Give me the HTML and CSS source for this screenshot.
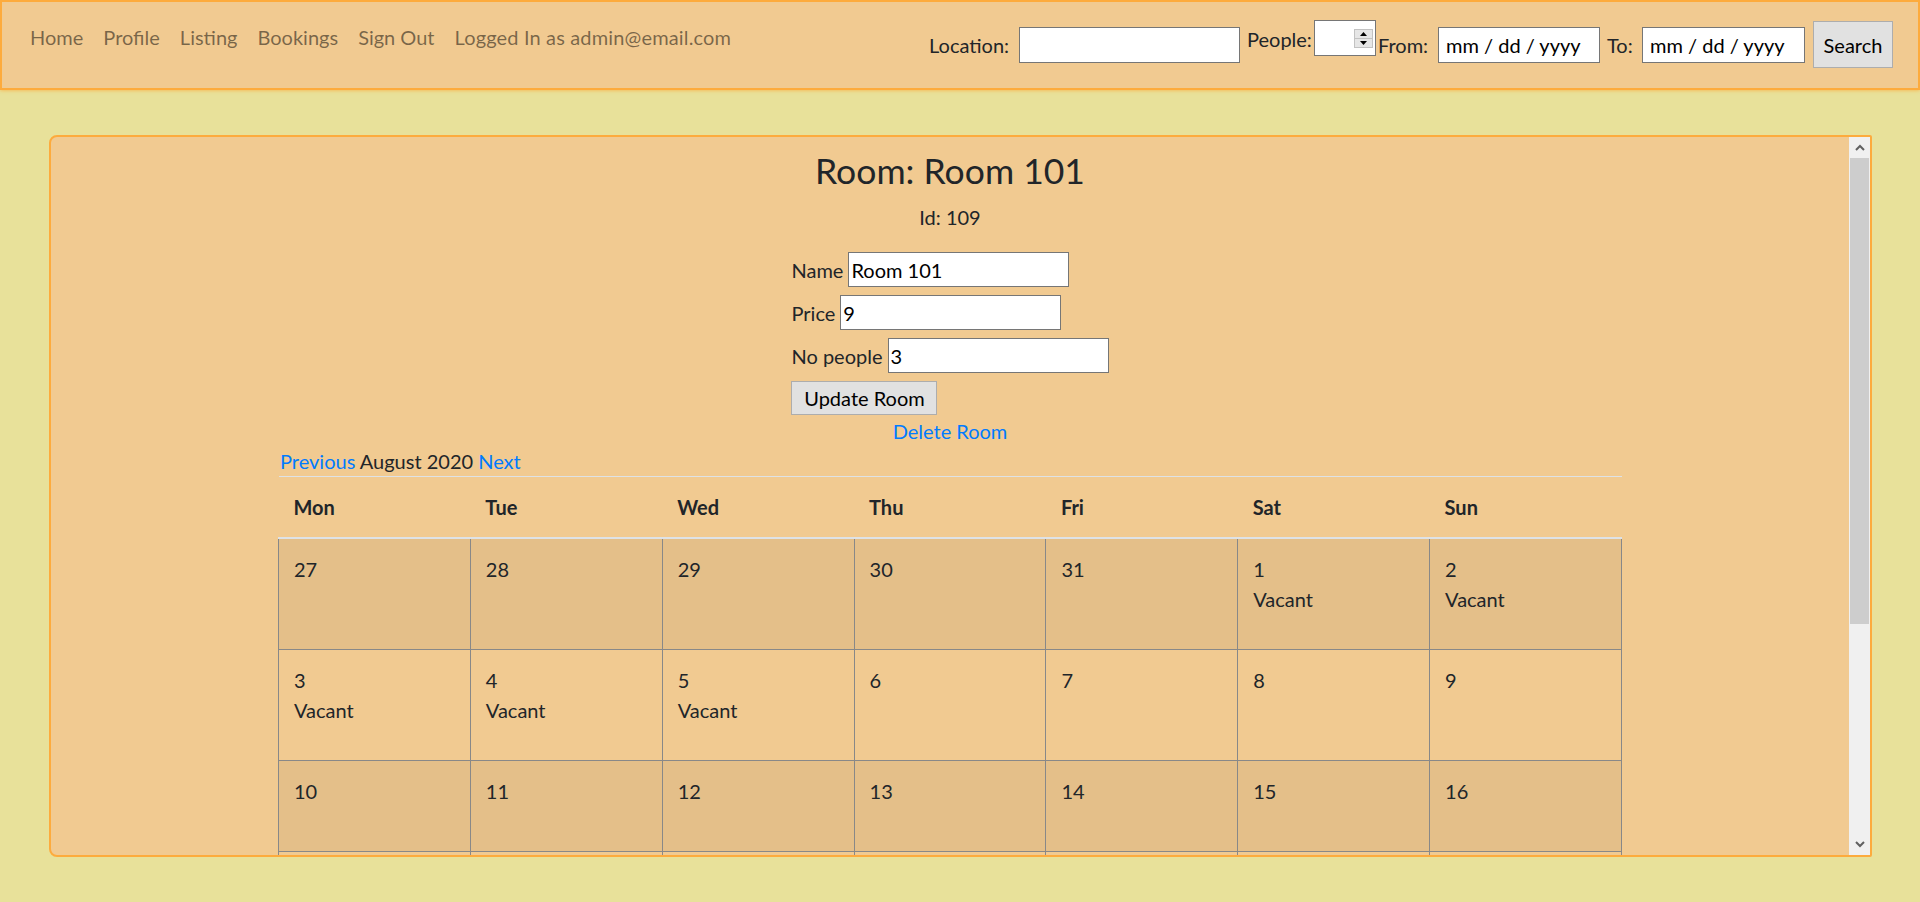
FILE: index.html
```html
<!DOCTYPE html>
<html lang="en">
<head>
<meta charset="utf-8">
<title>Room: Room 101</title>
<link rel="stylesheet" href="styles.css">
</head>
<body>
<nav class="navbar">
  <ul class="nav-links">
    <li><a class="nav-link" href="#">Home</a></li>
    <li><a class="nav-link" href="#">Profile</a></li>
    <li><a class="nav-link" href="#">Listing</a></li>
    <li><a class="nav-link" href="#">Bookings</a></li>
    <li><a class="nav-link" href="#">Sign Out</a></li>
    <li><span class="nav-link nav-user">Logged In as admin@email.com</span></li>
  </ul>
  <form class="search">
    <label class="search-label lbl-location" for="loc">Location:</label>
    <input class="field field-location" id="loc" type="text">
    <label class="search-label lbl-people" for="people">People:</label>
    <span class="num-box">
      <input class="num-field" id="people" type="text">
      <span class="spin">
        <span class="spin-btn"><svg width="7" height="4" viewBox="0 0 7 4"><path d="M0 4 L3.5 0 L7 4 Z" fill="#000"/></svg></span>
        <span class="spin-btn"><svg width="7" height="4" viewBox="0 0 7 4"><path d="M0 0 L3.5 4 L7 0 Z" fill="#000"/></svg></span>
      </span>
    </span>
    <label class="search-label lbl-from" for="from">From:</label>
    <input class="field field-date field-from" id="from" type="text" placeholder="mm / dd / yyyy">
    <label class="search-label lbl-to" for="to">To:</label>
    <input class="field field-date field-to" id="to" type="text" placeholder="mm / dd / yyyy">
    <button class="btn btn-search" type="button">Search</button>
  </form>
</nav>

<main class="card">
  <div class="card-body">
    <h2 class="room-title">Room: Room 101</h2>
    <p class="room-id">Id: 109</p>
    <form class="room-form">
      <div class="form-row"><label for="name">Name</label><input class="field field-room" id="name" type="text" value="Room 101"></div>
      <div class="form-row"><label for="price">Price</label><input class="field field-room" id="price" type="text" value="9"></div>
      <div class="form-row"><label for="nop">No people</label><input class="field field-room" id="nop" type="text" value="3"></div>
      <button class="btn btn-update" type="button">Update Room</button>
    </form>
    <a class="link delete-link" href="#">Delete Room</a>

    <section class="calendar">
      <div class="cal-nav"><a class="link" href="#">Previous</a> August 2020 <a class="link" href="#">Next</a></div>
      <table class="cal-table">
        <thead>
          <tr><th>Mon</th><th>Tue</th><th>Wed</th><th>Thu</th><th>Fri</th><th>Sat</th><th>Sun</th></tr>
        </thead>
        <tbody>
          <tr>
            <td><div class="day">27</div></td>
            <td><div class="day">28</div></td>
            <td><div class="day">29</div></td>
            <td><div class="day">30</div></td>
            <td><div class="day">31</div></td>
            <td><div class="day">1<span class="status">Vacant</span></div></td>
            <td><div class="day">2<span class="status">Vacant</span></div></td>
          </tr>
          <tr>
            <td><div class="day">3<span class="status">Vacant</span></div></td>
            <td><div class="day">4<span class="status">Vacant</span></div></td>
            <td><div class="day">5<span class="status">Vacant</span></div></td>
            <td><div class="day">6</div></td>
            <td><div class="day">7</div></td>
            <td><div class="day">8</div></td>
            <td><div class="day">9</div></td>
          </tr>
          <tr>
            <td><div class="day">10</div></td>
            <td><div class="day">11</div></td>
            <td><div class="day">12</div></td>
            <td><div class="day">13</div></td>
            <td><div class="day">14</div></td>
            <td><div class="day">15</div></td>
            <td><div class="day">16</div></td>
          </tr>
          <tr>
            <td><div class="day">17</div></td>
            <td><div class="day">18</div></td>
            <td><div class="day">19</div></td>
            <td><div class="day">20</div></td>
            <td><div class="day">21</div></td>
            <td><div class="day">22</div></td>
            <td><div class="day">23</div></td>
          </tr>
          <tr>
            <td><div class="day">24</div></td>
            <td><div class="day">25</div></td>
            <td><div class="day">26</div></td>
            <td><div class="day">27</div></td>
            <td><div class="day">28</div></td>
            <td><div class="day">29</div></td>
            <td><div class="day">30</div></td>
          </tr>
          <tr>
            <td><div class="day">31</div></td>
            <td><div class="day">1</div></td>
            <td><div class="day">2</div></td>
            <td><div class="day">3</div></td>
            <td><div class="day">4</div></td>
            <td><div class="day">5</div></td>
            <td><div class="day">6</div></td>
          </tr>
        </tbody>
      </table>
    </section>
  </div>

  <div class="scrollbar" aria-hidden="true">
    <span class="sb-btn"><svg width="10" height="7" viewBox="0 0 10 7"><path d="M1 6 L5 2 L9 6" fill="none" stroke="#606060" stroke-width="2"/></svg></span>
    <span class="sb-track"><span class="sb-thumb"></span></span>
    <span class="sb-btn"><svg width="10" height="7" viewBox="0 0 10 7"><path d="M1 1 L5 5 L9 1" fill="none" stroke="#606060" stroke-width="2"/></svg></span>
  </div>
</main>
</body>
</html>
```

FILE: styles.css
```css
* { box-sizing: border-box; }

html, body { margin: 0; height: 100%; }

body {
  background: #e8e19a;
  font-family: Lato, "Open Sans", sans-serif;
  font-size: 20px;
  line-height: 30px;
  color: #212529;
  overflow: hidden;
}

/* ---------- navbar ---------- */
.navbar {
  display: flex;
  align-items: flex-start;
  height: 90px;
  background: #f1ca91;
  border: 2px solid #fdab3d;
  box-shadow: 0 0 4px #fdab3d;
  padding: 0 25px 0 18px;
}

.nav-links {
  display: flex;
  list-style: none;
  margin: 20px 0 0;
  padding: 0;
}

.nav-link {
  display: block;
  padding: 0 10px;
  color: rgba(0, 0, 0, 0.5);
  text-decoration: none;
  white-space: nowrap;
}

.nav-user { letter-spacing: 0.15px; }

.search {
  display: grid;
  grid-template-columns: 90px 221px 74px 62px 62px 162px 42px 163px 88px;
  align-items: start;
  margin: 0 0 0 auto;
}

.search-label { margin-top: 28px; white-space: nowrap; }
.lbl-people { padding-left: 7px; margin-top: 22px; }
.lbl-from { padding-left: 2px; }
.lbl-to { padding-left: 7px; }

.field {
  height: 36px;
  border: 1px solid #767676;
  background: #fff;
  font: inherit;
  color: #000;
  padding: 0 2px;
  border-radius: 0;
  outline: none;
}

.field-location { width: 221px; margin-top: 25px; }
.field-date { margin-top: 25px; padding-left: 7px; }
.field-date::placeholder { color: #000; opacity: 1; }
.field-from { width: 162px; }
.field-to { width: 163px; }

.num-box {
  display: flex;
  align-items: center;
  width: 62px;
  height: 36px;
  margin-top: 18px;
  background: #fff;
  border: 1px solid #767676;
}

.num-field {
  width: 38px;
  height: 100%;
  border: 0;
  padding: 0 2px;
  font: inherit;
  outline: none;
  background: transparent;
}

.spin {
  display: flex;
  flex-direction: column;
  margin-left: auto;
  margin-right: 2px;
  border: 1px solid #c2c2c2;
  background: #e6e6e6;
}

.spin-btn {
  display: flex;
  align-items: center;
  justify-content: center;
  width: 17px;
  height: 8.5px;
}

.spin-btn + .spin-btn { border-top: 1px solid #c2c2c2; }

.btn {
  font: inherit;
  color: #000;
  background: #e1e1e1;
  border: 1px solid #adadad;
  border-radius: 0;
  padding: 0;
  cursor: pointer;
}

.btn-search {
  width: 80px;
  height: 47px;
  margin: 19px 0 0 8px;
}

/* ---------- card ---------- */
.card {
  display: flex;
  height: 722px;
  margin: 45px 48px 0 49px;
  background: #f1ca91;
  border: 2px solid #fdab3d;
  border-radius: 8px 2px 2px 8px;
  overflow: hidden;
}

.card-body {
  flex: 1;
  min-width: 0;
  overflow: hidden;
  padding-top: 12px;
  text-align: center;
}

.scrollbar {
  display: flex;
  flex-direction: column;
  width: 21px;
  background: #f0f0f0;
}

.sb-btn {
  display: flex;
  align-items: center;
  justify-content: center;
  height: 21px;
  flex: none;
}

.sb-track {
  flex: 1;
  display: flex;
  flex-direction: column;
}

.sb-thumb {
  height: 466px;
  margin: 0 1px;
  background: #cdcdcd;
}

.room-title {
  margin: 0 0 10px;
  font-size: 35.5px;
  line-height: 43px;
  font-weight: 400;
}

.room-id { margin: 0 0 20px; }

.room-form {
  display: inline-block;
  text-align: left;
  margin: 0 0 1px;
}

.form-row {
  display: flex;
  align-items: center;
  gap: 5px;
  margin-bottom: 8px;
}

.field-room { width: 221px; height: 35px; }

.btn-update {
  display: block;
  width: 146px;
  height: 34px;
  margin-top: 1px;
}

.link { color: #007bff; text-decoration: none; }
.delete-link { display: block; }

/* ---------- calendar ---------- */
.calendar {
  width: 1344px;
  margin: 0 auto 20px;
  text-align: left;
}

.cal-nav { padding-left: 2px; }

.cal-table {
  width: 100%;
  border-collapse: collapse;
  table-layout: fixed;
}

.cal-table th {
  padding: 15px;
  text-align: left;
  font-weight: 700;
  border-top: 1px solid #dee2e6;
  border-bottom: 2px solid #dee2e6;
}

.cal-table td {
  padding: 15px;
  vertical-align: top;
  border: 1px solid #888;
}

.cal-table tbody tr:nth-child(odd) td { background: rgba(0, 0, 0, 0.05); }

.day { min-height: 60px; }
.status { display: block; padding-bottom: 20px; }
```
